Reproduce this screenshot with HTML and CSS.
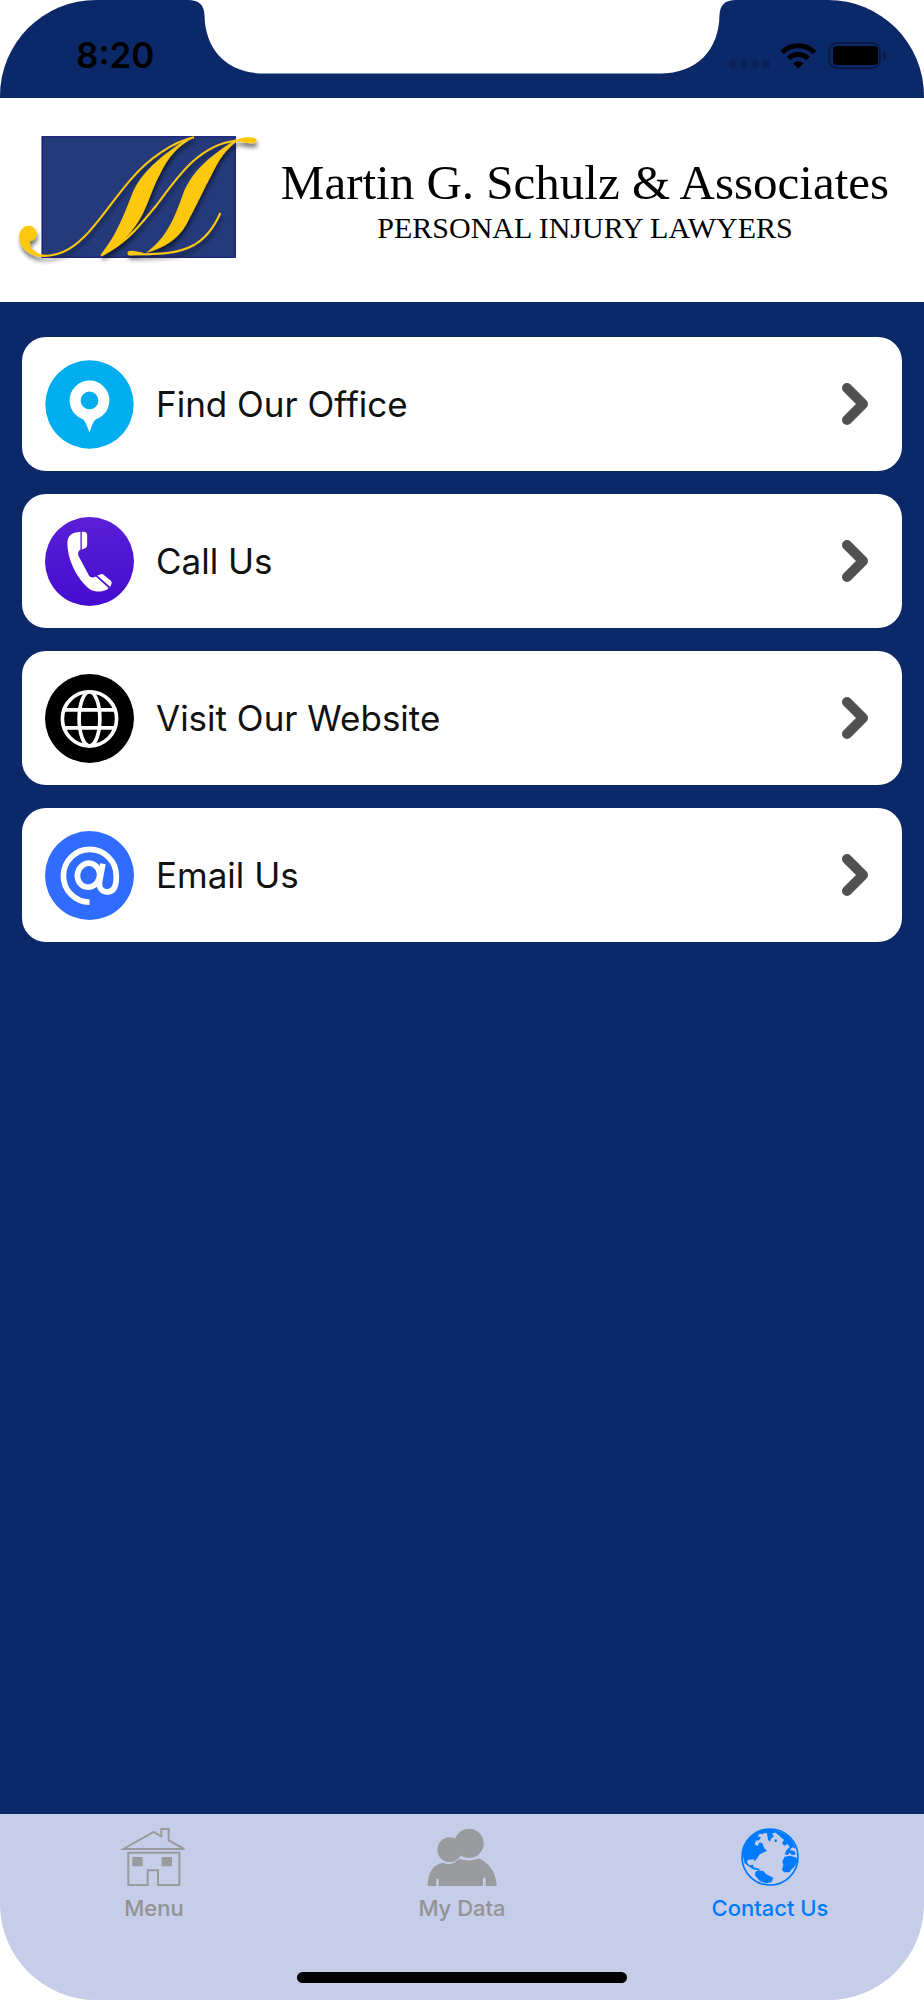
FILE: index.html
```html
<!DOCTYPE html>
<html lang="en">
<head>
  <meta charset="UTF-8">
  <meta name="viewport" content="width=device-width, initial-scale=1.0">
  <title>Contact Us</title>
  <link rel="stylesheet" href="styles.css">
</head>
<body>
  <div class="screen">
    <div class="status-bar">
      <span class="time">8:20</span>
      <svg class="notch" viewBox="0 0 548 74" aria-hidden="true">
        <path fill="#fff" d="M0 0C11 0 16 5 16.500 15C17 50 39 73.500 76 73.500H472C509 73.500 531 50 531.500 15C532 5 537 0 548 0Z"/>
      </svg>
      <svg class="status-icons" viewBox="0 0 160 30" aria-hidden="true">
        <g fill="#0a2059">
          <circle cx="5" cy="24" r="4"/>
          <circle cx="16" cy="24" r="4"/>
          <circle cx="27" cy="24" r="4"/>
          <circle cx="38" cy="24" r="4"/>
        </g>
        <g fill="none" stroke="#000" stroke-width="5">
          <path d="M54 12.500A23 23 0 0 1 86.500 12.500"/>
          <path d="M60.500 18.500A14 14 0 0 1 80 18.500"/>
        </g>
        <path d="M65 23.500Q70.300 19 75.500 23.500L70.300 28.500Z"/>
        <rect x="101" y="3" width="51" height="25" rx="8" fill="none" stroke="#0a1a48" stroke-width="2"/>
        <rect x="105" y="6" width="45" height="19" rx="4"/>
        <path fill="#0a1a48" d="M155 11Q158 12 158 15.500T155 20Z"/>
      </svg>
    </div>

    <header class="header">
      <svg class="logo" viewBox="45 60 780 420" aria-hidden="true">
        <defs>
          <filter id="shadow" x="-10%" y="-10%" width="125%" height="130%">
            <feDropShadow dx="3" dy="12" stdDeviation="7" flood-color="#000" flood-opacity="0.55"/>
          </filter>
        </defs>
        <rect x="126" y="80" width="580" height="362" fill="#243a7a" stroke="#0b0b72" stroke-width="3"/>
        <g filter="url(#shadow)" fill="#fdc80d">
          <!-- ball and thin strokes -->
          <path d="M90 393C103 392 111 382 110 369C108 355 98 347 85 347C68 348 57 363 58 384C60 416 90 441 133 441L140 435C110 434 86 416 90 393Z"/>
          <g fill="none" stroke="#fdc80d" stroke-width="6">
            <path d="M130 438C188 438 228 408 268 364C315 312 350 255 398 202C445 147 520 95 582 82"/>
            <path d="M304 436C385 395 420 345 470 285C530 205 595 105 706 92"/>
            <path d="M386 431C480 436 535 430 582 405C622 382 644 348 661 309"/>
          </g>
          <!-- thick stems -->
          <path d="M552 92C465 150 415 200 394 258C362 340 342 385 301 435L306 439C365 402 398 365 421 325C446 280 460 225 482 188C503 145 530 110 575 86Z"/>
          <path d="M700 94C612 150 570 195 547 258C521 330 500 382 438 429C490 415 535 387 558 345C590 285 610 240 632 200C655 150 680 115 710 95Z"/>
          <path d="M700 90C715 88 725 82 745 82C762 82 771 85 770 92C768 101 755 100 745 99C730 98 715 93 702 95Z"/>
          <path d="M382 429C383 423 392 421 402 423L430 428V434L402 436C390 438 382 436 382 429Z"/>
        </g>
      </svg>
      <div class="brand">
        <h1 class="brand-name">Martin G. Schulz &amp; Associates</h1>
        <p class="brand-tagline">PERSONAL INJURY LAWYERS</p>
      </div>
    </header>

    <main class="links">
      <a class="card" href="#office">
        <svg class="card-icon" viewBox="0 0 266 266" aria-hidden="true">
          <circle cx="133" cy="133" r="132" fill="#00adef"/>
          <circle cx="133" cy="121" r="43" fill="none" stroke="#fff" stroke-width="33"/>
          <path fill="#fff" d="M104 171C118 178 121 184 133 217C144 184 147 178 162 171L133 165Z"/>
        </svg>
        <span class="card-label">Find Our Office</span>
        <svg class="chevron" viewBox="0 0 26 42" aria-hidden="true"><path d="M5 5L21 21L5 37"/></svg>
      </a>
      <a class="card" href="#call">
        <svg class="card-icon" viewBox="0 0 266 266" aria-hidden="true">
          <defs>
            <linearGradient id="violet" x1="0" y1="0" x2="0" y2="1">
              <stop offset="0" stop-color="#5b1fd8"/>
              <stop offset="1" stop-color="#440ccf"/>
            </linearGradient>
          </defs>
          <circle cx="133" cy="133" r="133" fill="url(#violet)"/>
          <g fill="#fff">
            <path d="M106 44V98C98 102 97 112 103 122L131 174C135 182 145 182 152 178L190 212C185 220 168 223 156 223C140 223 125 212 108 190C84 158 68 118 67 82C66 56 78 46 106 44Z"/>
            <path d="M110 44H116C122 44 126 48 126 54V84C126 91 121 95 110 97Z"/>
            <path d="M156 175L168 171C171 170 173 171 176 173L196 190C199 193 200 196 199 199L195 209Z"/>
          </g>
        </svg>
        <span class="card-label">Call Us</span>
        <svg class="chevron" viewBox="0 0 26 42" aria-hidden="true"><path d="M5 5L21 21L5 37"/></svg>
      </a>
      <a class="card" href="#website">
        <svg class="card-icon" viewBox="0 0 266 266" aria-hidden="true">
          <circle cx="133" cy="133" r="133" fill="#000"/>
          <g fill="none" stroke="#fff" stroke-width="11">
            <circle cx="133" cy="134" r="81"/>
            <ellipse cx="133" cy="134" rx="31" ry="81"/>
            <path d="M57 107H209M57 161H209"/>
          </g>
        </svg>
        <span class="card-label">Visit Our Website</span>
        <svg class="chevron" viewBox="0 0 26 42" aria-hidden="true"><path d="M5 5L21 21L5 37"/></svg>
      </a>
      <a class="card" href="#email">
        <svg class="card-icon" viewBox="0 0 266 266" aria-hidden="true">
          <circle cx="133" cy="133" r="133" fill="#2f6cff"/>
          <g fill="none" stroke="#fff" stroke-width="17">
            <path d="M133 213A79 79 0 1 1 213 134C214 164 206 182 187 182C168 182 160 168 163 152L173 98"/>
            <ellipse cx="130" cy="132" rx="33" ry="36" transform="rotate(14 130 132)"/>
          </g>
        </svg>
        <span class="card-label">Email Us</span>
        <svg class="chevron" viewBox="0 0 26 42" aria-hidden="true"><path d="M5 5L21 21L5 37"/></svg>
      </a>
    </main>

    <footer class="footer">
      <nav class="tabs">
        <a class="tab" href="#menu">
          <svg class="tab-icon" viewBox="114 84 208 174" aria-hidden="true">
            <g fill="none" stroke="#999b9e" stroke-width="6">
              <path d="M126 147L217 96L240 109V87H262V121L309 147Z"/>
              <path d="M141 158H294V255H230V211H199V255H141Z"/>
            </g>
            <path fill="#999b9e" d="M153 171h31v28h-31zM241 171h31v28h-31z"/>
          </svg>
          <span>Menu</span>
        </a>
        <a class="tab" href="#data">
          <svg class="tab-icon" viewBox="1042 84 208 174" aria-hidden="true">
            <g fill="#999b9e">
              <circle cx="1167" cy="130" r="44"/>
              <circle cx="1109" cy="149" r="37"/>
              <path d="M1043 258C1043 217 1060 193 1088 188C1100 193 1115 194 1124 187L1139 176C1155 183 1180 183 1196 175C1230 190 1249 220 1250 258H1217V233H1209V258H1076V236H1069V258Z"/>
            </g>
          </svg>
          <span>My Data</span>
        </a>
        <a class="tab active" href="#contact">
          <svg class="tab-icon" viewBox="180 84 174 174" aria-hidden="true">
            <circle cx="267" cy="171" r="84" fill="none" stroke="#007aff" stroke-width="5"/>
            <g fill="#007aff">
              <path d="M184 162C185 130 205 102 240 91L252 94L246 103L236 101L230 109L240 112L234 121L224 122L221 133L230 138L236 127L244 130L250 145L258 152L246 158L236 163L229 174L221 184L217 178L199 180L199 190L206 196L216 194L218 202L236 207L234 211L216 208L202 198L191 190Z"/>
              <path d="M237 91C260 84 275 88 290 93L300 102L293 106L284 98L274 99L278 110L270 116L267 125L261 119L258 100L246 98Z"/>
              <circle cx="284" cy="122" r="4"/>
              <path d="M286 93C316 98 336 119 344 146L334 142L326 150L340 153L345 163L333 166L326 158L320 165L311 163L316 151L326 141L320 132L310 137L303 130L309 119L298 111Z"/>
              <path d="M311 170L327 167L350 174C349 188 342 201 332 208L326 217L309 217L303 209L307 194L304 184Z"/>
              <path d="M223 216L232 211L248 214L254 221L277 234L271 247L257 250L237 244L228 233L222 226Z"/>
            </g>
          </svg>
          <span>Contact Us</span>
        </a>
      </nav>
      <div class="home-indicator"></div>
    </footer>
  </div>
</body>
</html>
```
FILE: styles.css
```css
* {
  box-sizing: border-box;
}

body {
  margin: 0;
  background-color: #fff;
  font-family: Inter, "Liberation Sans", sans-serif;
}

.screen {
  min-height: 100vh;
  display: flex;
  flex-direction: column;
}

/* Status bar */
.status-bar {
  display: grid;
  grid-template-columns: minmax(0, 1fr) 548px minmax(0, 1fr);
  height: 98px;
  background-color: #0b2868;
  border-radius: 96px 96px 0 0;
}

.time {
  padding: 34px 0 0 76px;
  font-size: 35px;
  line-height: 42px;
  font-weight: 600;
  color: #000;
}

.notch {
  width: 100%;
}

.status-icons {
  width: 160px;
  height: 30px;
  margin-top: 40px;
  justify-self: end;
  margin-right: 36px;
}

/* Header */
.header {
  display: flex;
  align-items: center;
  height: 204px;
  padding: 0 29px 0 15px;
  background-color: #fff;
}

.logo {
  width: 260px;
  height: 140px;
  flex-shrink: 0;
}

.brand {
  flex: 1;
  text-align: center;
  white-space: nowrap;
  font-family: "Liberation Serif", "Times New Roman", serif;
  color: #000;
}

.brand-name {
  margin: 0;
  font-size: 49px;
  line-height: 56px;
  font-weight: 400;
}

.brand-tagline {
  margin: 0;
  font-size: 30px;
  line-height: 34px;
}

/* Contact links */
.links {
  flex: 1;
  display: flex;
  flex-direction: column;
  gap: 23px;
  padding: 35px 22px;
  background-color: #0b2868;
}

.card {
  display: flex;
  align-items: center;
  gap: 22px;
  height: 134px;
  padding: 0 34px 0 23px;
  border-radius: 24px;
  background-color: #fff;
  color: #111;
  text-decoration: none;
}

.card-icon {
  width: 89px;
  height: 89px;
}

.card-label {
  flex: 1;
  font-size: 35px;
  line-height: 42px;
}

.chevron {
  width: 26px;
  height: 42px;
  fill: none;
  stroke: #515151;
  stroke-width: 10;
  stroke-linecap: round;
  stroke-linejoin: round;
}

/* Bottom tabs */
.footer {
  display: flex;
  flex-direction: column;
  justify-content: space-between;
  align-items: center;
  height: 186px;
  padding: 14px 0 17px;
  background-color: #c6cde8;
  border-radius: 0 0 96px 96px;
}

.tabs {
  display: grid;
  grid-template-columns: repeat(3, 1fr);
  width: 100%;
}

.tab {
  display: flex;
  flex-direction: column;
  align-items: center;
  gap: 9px;
  font-size: 22px;
  line-height: 26px;
  font-weight: 500;
  color: #929394;
  text-decoration: none;
}

.tab.active {
  color: #007aff;
}

.tab-icon {
  width: 70px;
  height: 58px;
}

.home-indicator {
  width: 330px;
  height: 11px;
  border-radius: 6px;
  background-color: #000;
}
```
